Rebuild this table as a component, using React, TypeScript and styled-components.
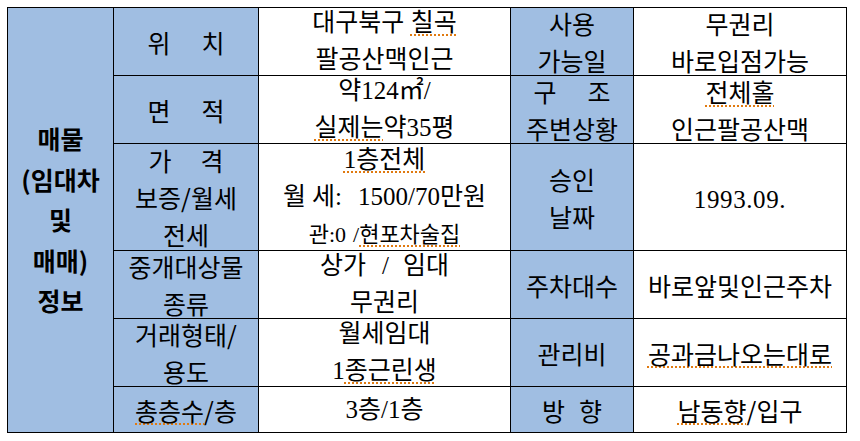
import { Fragment } from 'react';
import styled, { createGlobalStyle } from 'styled-components';

const GlobalStyle = createGlobalStyle`
  html, body {
    margin: 0;
    padding: 0;
    background: #ffffff;
  }
  body {
    font-family: "Noto Sans CJK KR", "Noto Sans", sans-serif;
    color: #000000;
  }
`;

const BLUE = '#a0bee2';
const LINE = '#000000';

const Table = styled.div`
  display: grid;
  grid-template-columns: 106px 145px 252px 123px 213px;
  grid-template-rows: 68px 68px 107px 68px 68px 46px;
  width: max-content;
  margin: 7px 0 0 7px;
  border-top: 1px solid ${LINE};
  border-left: 1px solid ${LINE};
`;

const Cell = styled.div<{ $shaded?: boolean; $serif?: boolean; $row: number; $col: number }>`
  grid-row: ${({ $row }) => $row};
  grid-column: ${({ $col }) => $col};
  box-sizing: border-box;
  display: flex;
  flex-direction: column;
  align-items: center;
  justify-content: center;
  gap: 7px;
  overflow: visible;
  border-right: 1px solid ${LINE};
  border-bottom: 1px solid ${LINE};
  background: ${({ $shaded }) => ($shaded ? BLUE : '#ffffff')};
  font-family: ${({ $serif }) =>
    $serif
      ? '"Liberation Serif", "Noto Sans CJK KR", serif'
      : '"Noto Sans CJK KR", "Noto Sans", sans-serif'};
  font-size: 25px;
  white-space: nowrap;
`;

const HeaderCell = styled.div`
  grid-row: 1 / 7;
  grid-column: 1;
  box-sizing: border-box;
  display: flex;
  flex-direction: column;
  align-items: center;
  justify-content: center;
  gap: 9px;
  border-right: 1px solid ${LINE};
  border-bottom: 1px solid ${LINE};
  background: ${BLUE};
  font-family: "Noto Sans CJK KR", "Noto Sans", sans-serif;
  font-weight: 700;
  font-size: 25px;
  white-space: nowrap;
`;

const HeaderLine = styled.div`
  line-height: 31.5px;
  height: 31.5px;
`;

const Line = styled.div`
  line-height: 30px;
  height: 30px;
  flex-shrink: 0;
`;

const GapSpan = styled.span<{ $w: number }>`
  display: inline-block;
  width: ${({ $w }) => $w}px;
`;

const Spell = styled.span`
  text-decoration: underline dotted #e07a10;
  text-decoration-thickness: 1.5px;
  text-underline-offset: 3px;
`;

const Small = styled.span`
  font-size: 22px;
`;

const Digits = styled.span`
  font-family: "Liberation Serif", serif;
  font-size: 25px;
  letter-spacing: 0.6px;
`;

type Row = {
  label: React.ReactNode[];
  value: React.ReactNode[];
  sideLabel: React.ReactNode[];
  sideValue: React.ReactNode[];
};

const Gap = ({ w }: { w: number }) => <GapSpan $w={w} />;

const rows: Row[] = [
  {
    label: [<>위<Gap w={31} />치</>],
    value: [<>대구북구 <Spell>칠곡</Spell></>, '팔공산맥인근'],
    sideLabel: ['사용', '가능일'],
    sideValue: ['무권리', '바로입점가능'],
  },
  {
    label: [<>면<Gap w={31} />적</>],
    value: ['약124㎡/', <><Spell>실제는</Spell>약35평</>],
    sideLabel: [<>구<Gap w={31} />조</>, '주변상황'],
    sideValue: [<Spell>전체홀</Spell>, '인근팔공산맥'],
  },
  {
    label: [<>가<Gap w={29} />격</>, '보증/월세', '전세'],
    value: [
      <Spell>1층전체</Spell>,
      <>월<Gap w={6} />세:<Gap w={16} />1500/70만원</>,
      <Small>관:0<Gap w={7} />/<Spell>현포차술집</Spell></Small>,
    ],
    sideLabel: ['승인', '날짜'],
    sideValue: [<Digits>1993.09.</Digits>],
  },
  {
    label: ['중개대상물', '종류'],
    value: [<>상가<Gap w={16} />/<Gap w={14} />임대</>, '무권리'],
    sideLabel: ['주차대수'],
    sideValue: ['바로앞및인근주차'],
  },
  {
    label: ['거래형태/', '용도'],
    value: ['월세임대', <>1<Spell>종근린생</Spell></>],
    sideLabel: ['관리비'],
    sideValue: [<Spell>공과금나오는대로</Spell>],
  },
  {
    label: [<><Spell>총층수</Spell>/층</>],
    value: ['3층/1층'],
    sideLabel: [<>방<Gap w={14} />향</>],
    sideValue: [<><Spell>남동향</Spell>/입구</>],
  },
];

const header = ['매물', '(임대차', '및', '매매)', '정보'];

const lines = (items: React.ReactNode[]) =>
  items.map((item, i) => <Line key={i}>{item}</Line>);

const App = () => {
  return (
    <>
      <GlobalStyle />
      <Table>
        <HeaderCell>
          {header.map((h) => (
            <HeaderLine key={h}>{h}</HeaderLine>
          ))}
        </HeaderCell>
        {rows.map((row, i) => (
          <Fragment key={i}>
            <Cell $shaded $row={i + 1} $col={2}>
              {lines(row.label)}
            </Cell>
            <Cell $serif $row={i + 1} $col={3}>
              {lines(row.value)}
            </Cell>
            <Cell $shaded $row={i + 1} $col={4}>
              {lines(row.sideLabel)}
            </Cell>
            <Cell $row={i + 1} $col={5}>
              {lines(row.sideValue)}
            </Cell>
          </Fragment>
        ))}
      </Table>
    </>
  );
};

export default App;
